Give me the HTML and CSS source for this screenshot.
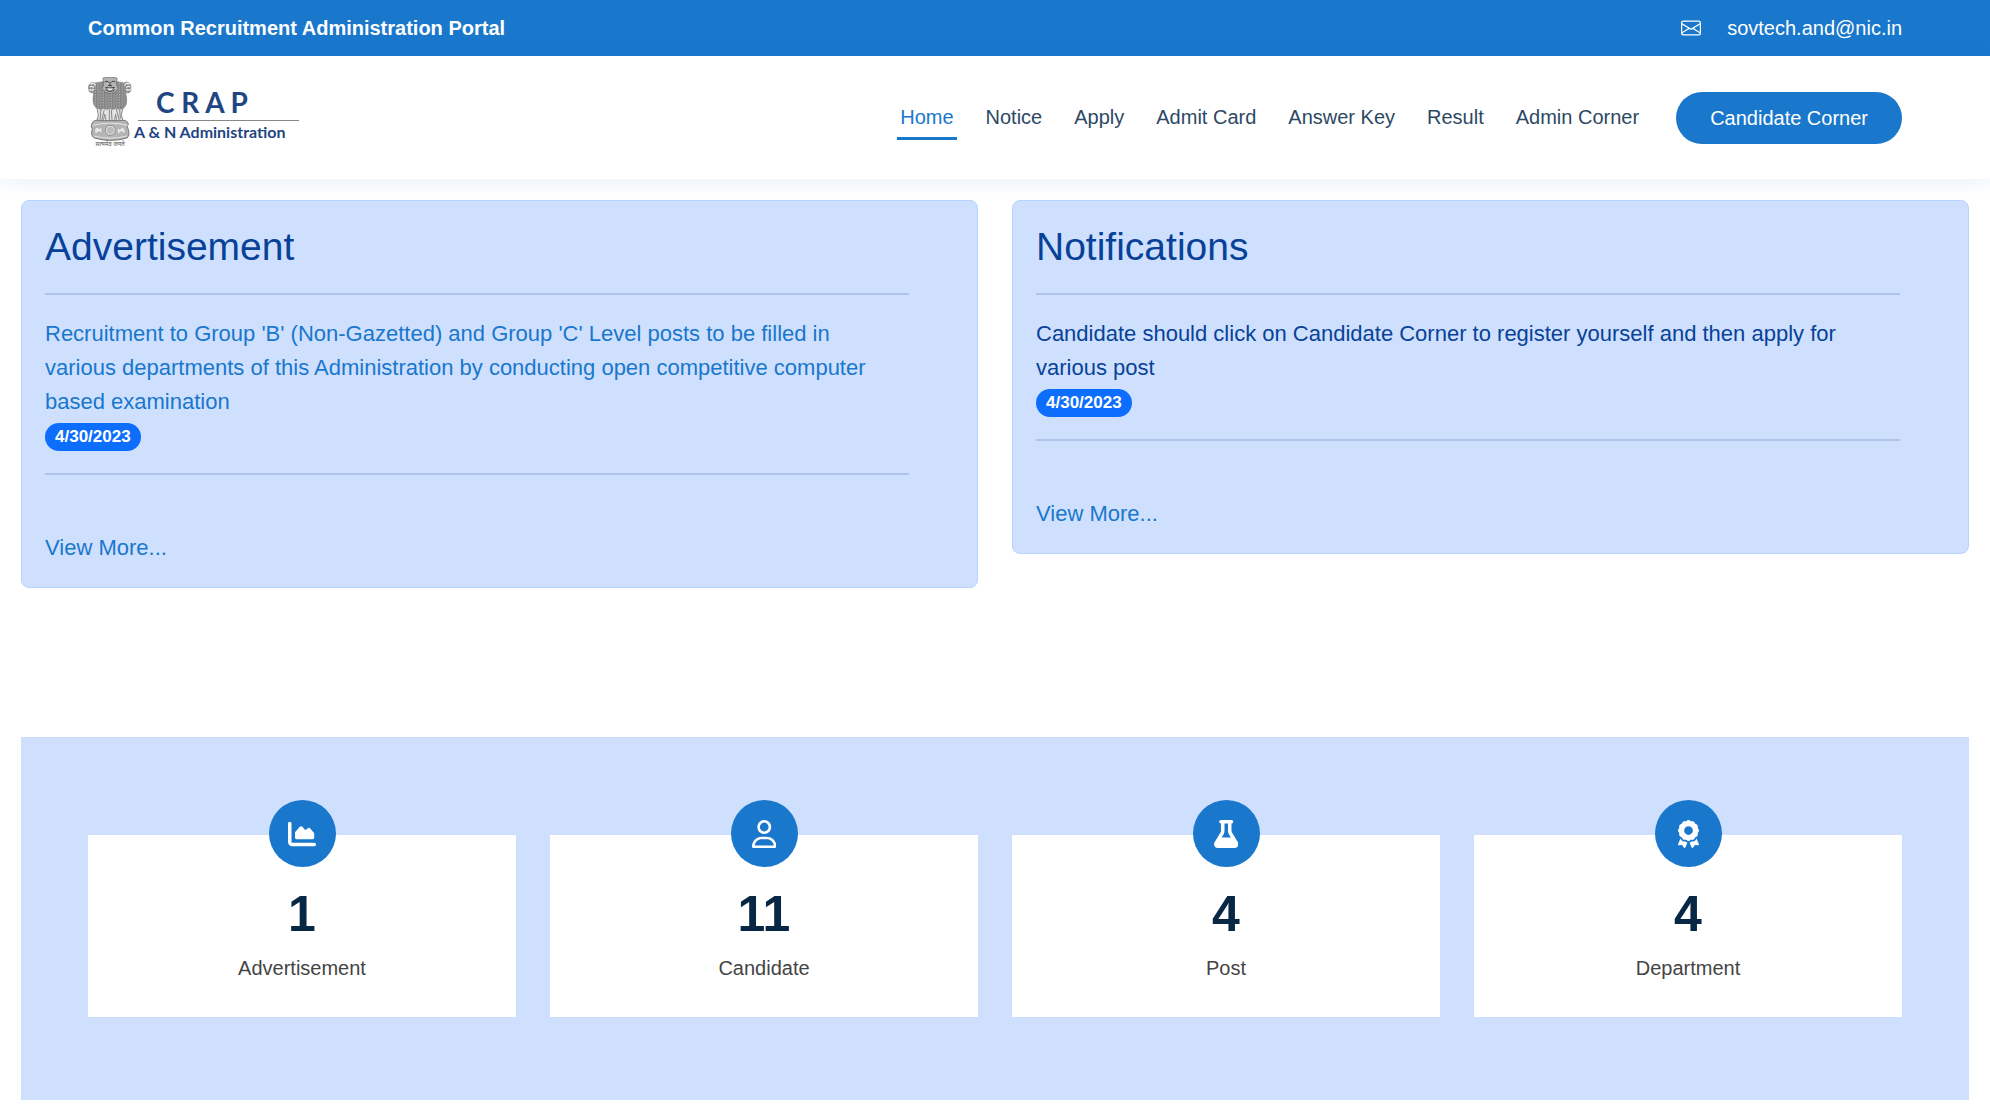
FILE: index.html
```html
<!DOCTYPE html>
<html lang="en">
<head>
  <meta charset="utf-8">
  <meta name="viewport" content="width=device-width, initial-scale=1">
  <title>Common Recruitment Administration Portal</title>
  <link rel="stylesheet" href="styles.css">
</head>
<body>
  <div class="topbar">
    <strong class="topbar-title">Common Recruitment Administration Portal</strong>
    <div class="contact">
      <svg class="mail-icon" viewBox="0 0 16 16" aria-hidden="true"><path d="M0 4a2 2 0 0 1 2-2h12a2 2 0 0 1 2 2v8a2 2 0 0 1-2 2H2a2 2 0 0 1-2-2V4Zm2-1a1 1 0 0 0-1 1v.217l7 4.2 7-4.2V4a1 1 0 0 0-1-1H2Zm13 2.383-4.708 2.825L15 11.105V5.383Zm-.034 6.876-5.64-3.471L8 9.583l-1.326-.795-5.64 3.47A1 1 0 0 0 2 13h12a1 1 0 0 0 .966-.741ZM1 11.105l4.708-2.897L1 5.383v5.722Z"/></svg>
      <a href="mailto:sovtech.and@nic.in">sovtech.and@nic.in</a>
    </div>
  </div>

  <header class="header">
    <a class="logo" href="#">
      <span class="emblem-box">
        <svg class="emblem" viewBox="0 0 132 192" aria-hidden="true">
          <defs>
            <pattern id="curls" width="8" height="8" patternUnits="userSpaceOnUse">
              <rect width="8" height="8" fill="#999"/>
              <path d="M0 2q2 4 4 0t4 0M-2 6q2 4 4 0t4 0t4 0" fill="none" stroke="#555" stroke-width="1.6"/>
              <circle cx="6" cy="5" r="1.5" fill="#ddd"/>
            </pattern>
          </defs>
          <path d="M20 18Q9 12 3 25Q-1 32 3 38Q1 43 7 46Q14 49 17 46L15 66Q14 84 24 92L34 97L98 97L108 92Q118 84 116 66L113 46Q120 50 126 45Q131 40 128 35Q132 26 124 18Q116 12 108 18L88 14L44 14Z" fill="url(#curls)" stroke="#858585" stroke-width="2"/>
          <path d="M7 22q11-8 15 4M5 30q8-5 12 2M4 38q6 3 14-1M125 22q-11-8-15 4M127 30q-8-5-12 2M128 38q-6 3-14-1" fill="none" stroke="#eee" stroke-width="4"/>
          <path d="M45 3Q66-2 87 3L86 24L91 34Q84 48 66 50Q48 48 42 34L47 24Z" fill="#b5b5b5" stroke="#606060" stroke-width="2"/>
          <path d="M50 15q8-6 12 1M70 16q6-7 12-1M66 14v12M60 26h12M52 31q13 6 28 0M52 38q14 10 28 0" fill="none" stroke="#3d3d3d" stroke-width="3"/>
          <path d="M55 33h22q-2 9-11 9t-11-9" fill="#eee" stroke="#444" stroke-width="2"/>
          <path d="M27 92Q37 101 48 93Q57 101 66 93Q76 101 84 93Q95 101 105 92L100 113L106 135H86L83 112L79 135H55L50 111L46 135H26L31 114Z" fill="#e2e2e2" stroke="#888" stroke-width="3"/>
          <path d="M39 96l-3 34M49 97l-8 34M64 97v36M70 97l2 33M85 96l9 35M95 96l2 30" stroke="#888" stroke-width="3"/>
          <path d="M12 139Q18 126 38 131H94Q116 126 121 140L118 149L121 158Q126 175 117 183Q66 198 17 182Q7 173 13 157L10 149Z" fill="#b5b5b5" stroke="#757575" stroke-width="3"/>
          <path d="M14 145Q66 132 119 145M17 177Q66 190 116 177" fill="none" stroke="#e5e5e5" stroke-width="3"/>
          <circle cx="67" cy="160" r="15" fill="#ddd" stroke="#777" stroke-width="2"/>
          <circle cx="67" cy="160" r="9" fill="#bbb" stroke="#999" stroke-width="2" stroke-dasharray="2 2"/>
          <path d="M20 158l7-8 7 5 9-4-2 8 3 12-7-7-8 1-6 9-2-10ZM88 154l7 3 9-6 7 7-1 16-6-10-8 1-6 8-2-9Z" fill="#e8e8e8" stroke="#888"/>
        </svg>
        <span class="motto">सत्यमेव जयते</span>
      </span>
      <span class="logo-words">
        <span class="logo-name">C R A P</span>
        <span class="logo-sub">A &amp; N Administration</span>
      </span>
    </a>
    <nav class="nav">
      <a class="active" href="#">Home</a>
      <a href="#">Notice</a>
      <a href="#">Apply</a>
      <a href="#">Admit Card</a>
      <a href="#">Answer Key</a>
      <a href="#">Result</a>
      <a href="#">Admin Corner</a>
      <button class="corner-btn" type="button">Candidate Corner</button>
    </nav>
  </header>

  <main>
    <div class="boards">
      <section class="board">
        <h1>Advertisement</h1>
        <hr>
        <p><a href="#">Recruitment to Group 'B' (Non-Gazetted) and Group 'C' Level posts to be filled in various departments of this Administration by conducting open competitive computer based examination</a></p>
        <span class="badge">4/30/2023</span>
        <hr>
        <a class="more" href="#">View More...</a>
      </section>
      <section class="board">
        <h1>Notifications</h1>
        <hr>
        <p>Candidate should click on Candidate Corner to register yourself and then apply for various post</p>
        <span class="badge">4/30/2023</span>
        <hr>
        <a class="more" href="#">View More...</a>
      </section>
    </div>

    <section class="counts">
      <div class="count">
        <span class="count-icon"><svg viewBox="0 0 512 512" aria-hidden="true"><path d="M64 64c0-17.7-14.3-32-32-32S0 46.3 0 64V400c0 44.2 35.8 80 80 80H480c17.7 0 32-14.3 32-32s-14.3-32-32-32H80c-8.8 0-16-7.2-16-16V64zm96 288H448c17.7 0 32-14.3 32-32V251.8c0-7.6-2.7-15-7.7-20.8l-65.8-76.8c-12.1-14.2-33.7-15-46.9-1.8l-21 21c-10 10-26.4 9.2-35.4-1.6l-39.2-47c-12.6-15.1-35.7-15.4-48.7-.6L135.9 215c-5.1 5.8-7.9 13.3-7.9 21.1v84c0 17.7 14.3 32 32 32z"/></svg></span>
        <span class="count-value">1</span>
        <span class="count-label">Advertisement</span>
      </div>
      <div class="count">
        <span class="count-icon"><svg viewBox="0 0 448 512" aria-hidden="true"><path d="M304 128a80 80 0 1 0 -160 0 80 80 0 1 0 160 0zM96 128a128 128 0 1 1 256 0A128 128 0 1 1 96 128zM49.3 464H398.7c-8.9-63.3-63.3-112-129-112H178.3c-65.7 0-120.1 48.7-129 112zM0 482.3C0 383.8 79.8 304 178.3 304h91.4C368.2 304 448 383.8 448 482.3c0 16.4-13.3 29.7-29.7 29.7H29.7C13.3 512 0 498.7 0 482.3z"/></svg></span>
        <span class="count-value">11</span>
        <span class="count-label">Candidate</span>
      </div>
      <div class="count">
        <span class="count-icon"><svg viewBox="0 0 448 512" aria-hidden="true"><path d="M288 0H160 128C110.3 0 96 14.3 96 32s14.3 32 32 32V196.8c0 11.8-3.3 23.5-9.5 33.5L10.3 406.2C3.6 417.2 0 429.7 0 442.6C0 480.9 31.1 512 69.4 512H378.6c38.3 0 69.4-31.1 69.4-69.4c0-12.8-3.6-25.4-10.3-36.4L329.5 230.4c-6.2-10.1-9.5-21.7-9.5-33.5V64c17.7 0 32-14.3 32-32s-14.3-32-32-32H288zM192 196.8V64h64V196.8c0 23.7 6.6 46.9 19 67.1L309.5 320h-171L173 263.9c12.4-20.2 19-43.4 19-67.1z"/></svg></span>
        <span class="count-value">4</span>
        <span class="count-label">Post</span>
      </div>
      <div class="count">
        <span class="count-icon"><svg viewBox="0 0 384 512" aria-hidden="true"><path d="M173.8 5.5c11-7.3 25.4-7.3 36.4 0L228 17.2c6 3.9 13 5.8 20.1 5.4l21.3-1.3c13.2-.8 25.6 6.4 31.5 18.2l9.6 19.1c3.2 6.4 8.4 11.5 14.7 14.7L344.5 83c11.8 5.9 19 18.3 18.2 31.5l-1.3 21.3c-.4 7.1 1.5 14.2 5.4 20.1l11.8 17.8c7.3 11 7.3 25.4 0 36.4L366.8 228c-3.9 6-5.8 13-5.4 20.1l1.3 21.3c.8 13.2-6.4 25.6-18.2 31.5l-19.1 9.6c-6.4 3.2-11.5 8.4-14.7 14.7L301 344.5c-5.9 11.8-18.3 19-31.5 18.2l-21.3-1.3c-7.1-.4-14.2 1.5-20.1 5.4l-17.8 11.8c-11 7.3-25.4 7.3-36.4 0L156 366.8c-6-3.9-13-5.8-20.1-5.4l-21.3 1.3c-13.2 .8-25.6-6.4-31.5-18.2l-9.6-19.1c-3.2-6.4-8.4-11.5-14.7-14.7L39.5 301c-11.8-5.9-19-18.3-18.2-31.5l1.3-21.3c.4-7.1-1.5-14.2-5.4-20.1L5.5 210.2c-7.3-11-7.3-25.4 0-36.4L17.2 156c3.9-6 5.8-13 5.4-20.1l-1.3-21.3c-.8-13.2 6.4-25.6 18.2-31.5l19.1-9.6C65 70.2 70.2 65 73.4 58.6L83 39.5c5.9-11.8 18.3-19 31.5-18.2l21.3 1.3c7.1 .4 14.2-1.5 20.1-5.4L173.8 5.5zM272 192a80 80 0 1 0 -160 0 80 80 0 1 0 160 0zM1.3 441.8L44.4 339.3c.2 .1 .3 .2 .4 .4l9.6 19.1c11.7 23.2 36 37.3 62 35.8l21.3-1.3c.2 0 .5 0 .7 .2l17.8 11.8c5.1 3.3 10.5 5.9 16.1 7.7l-37.6 89.3c-2.3 5.5-7.4 9.2-13.3 9.7s-11.6-2.2-14.8-7.2L74.4 455.5l-56.1 8.3c-5.7 .8-11.4-1.5-15-6s-4.3-10.7-2.1-16zm248 60.4L211.7 413c5.6-1.8 11-4.3 16.1-7.7l17.8-11.8c.2-.1 .4-.2 .7-.2l21.3 1.3c26 1.5 50.3-12.6 62-35.8l9.6-19.1c.1-.2 .2-.3 .4-.4l43.2 102.5c2.2 5.3 1.4 11.4-2.1 16s-9.3 6.9-15 6l-56.1-8.3-32.2 49.2c-3.2 5-8.9 7.7-14.8 7.2s-11-4.3-13.3-9.7z"/></svg></span>
        <span class="count-value">4</span>
        <span class="count-label">Department</span>
      </div>
    </section>
  </main>
</body>
</html>
```
FILE: styles.css
```css
* {
  box-sizing: border-box;
}

body {
  margin: 0;
  background: #fff;
  color: #444;
  font-family: "Liberation Sans", Arial, Helvetica, sans-serif;
  font-size: 20px;
  line-height: 30px;
}

a {
  color: #1977cc;
  text-decoration: none;
}

.topbar {
  display: flex;
  align-items: center;
  justify-content: space-between;
  padding: 13px 88px;
  background: #1977cc;
  color: #fff;
}

.contact {
  display: flex;
  align-items: center;
  gap: 26px;
}

.contact a {
  color: #fff;
}

.mail-icon {
  width: 20px;
  height: 20px;
  fill: #fff;
}

.header {
  display: flex;
  align-items: center;
  justify-content: space-between;
  padding: 21px 88px;
  background: #fff;
  box-shadow: 0 3px 21px rgba(25, 119, 204, 0.1);
}

.logo {
  display: flex;
  gap: 2px;
  padding-bottom: 10px;
  color: #1f4583;
  font-family: Lato, "Open Sans", sans-serif;
  font-weight: 700;
}

.emblem-box {
  display: flex;
  flex-direction: column;
  align-items: center;
  width: 44px;
}

.emblem {
  width: 44px;
  height: 64px;
}

.motto {
  color: #555;
  font-family: "Noto Sans Devanagari", "Noto Sans", sans-serif;
  font-size: 6px;
  font-weight: 400;
  line-height: 7px;
  white-space: nowrap;
}

.logo-words {
  display: flex;
  flex-direction: column;
  padding-top: 10px;
}

.logo-name {
  width: 161px;
  margin-left: 4px;
  padding: 0 0 2px 18px;
  border-bottom: 1px solid #888;
  font-size: 28px;
  line-height: 31px;
}

.logo-sub {
  font-size: 16px;
  line-height: 22px;
}

.nav {
  display: flex;
  align-items: center;
  gap: 26px;
}

.nav a {
  padding: 7px 3px 5px;
  border-bottom: 3px solid transparent;
  color: #2c4964;
}

.nav .active {
  border-color: #1977cc;
  color: #1977cc;
}

.corner-btn {
  margin-left: 8px;
  padding: 11px 34px;
  border: 0;
  border-radius: 27px;
  background: #1977cc;
  color: #fff;
  font: inherit;
}

.boards {
  display: grid;
  grid-template-columns: 1fr 1fr;
  align-items: start;
  gap: 34px;
  padding: 21px 21px 0;
}

.board {
  padding: 22px 68px 22px 23px;
  border: 1px solid #b6d4fe;
  border-radius: 8px;
  background: #cfe0ff;
  color: #084298;
  font-size: 22px;
  line-height: 34px;
}

.board h1 {
  margin: 0;
  font-size: 39px;
  font-weight: 400;
  line-height: 48px;
}

.board hr {
  margin: 22px 0;
  border: 0;
  border-top: 2px solid #b0c3ea;
}

.board p {
  margin: 0;
  padding-right: 24px;
}

.badge {
  display: block;
  width: max-content;
  margin-top: 4px;
  padding: 5px 10px;
  border-radius: 14px;
  background: #0d6efd;
  color: #fff;
  font-size: 17px;
  font-weight: 700;
  line-height: 18px;
}

.more {
  display: block;
  margin-top: 56px;
}

.counts {
  display: grid;
  grid-template-columns: repeat(4, 1fr);
  gap: 34px;
  margin: 149px 21px 13px;
  padding: 63px 67px 83px;
  background: #cfe0ff;
}

.count {
  display: flex;
  flex-direction: column;
  align-items: center;
  margin-top: 35px;
  padding-bottom: 34px;
  background: #fff;
}

.count-icon {
  display: flex;
  align-items: center;
  justify-content: center;
  width: 67px;
  height: 67px;
  margin-top: -35px;
  border-radius: 50%;
  background: #1977cc;
}

.count-icon svg {
  height: 28px;
  fill: #fff;
}

.count-value {
  margin: 16px 0 8px;
  color: #082744;
  font-size: 50px;
  font-weight: 700;
  line-height: 62px;
}
```
